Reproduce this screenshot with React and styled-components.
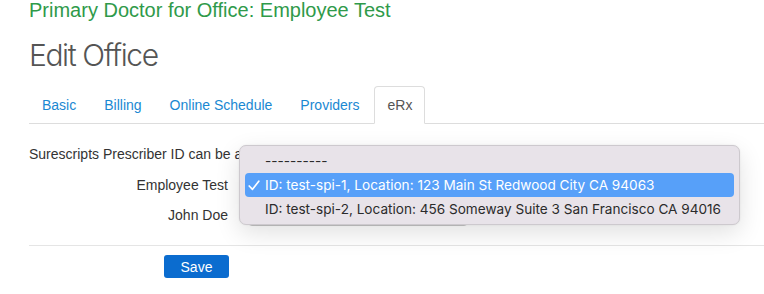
import React from 'react'
import styled, { createGlobalStyle } from 'styled-components'

const GlobalStyle = createGlobalStyle`
  html, body {
    margin: 0;
    padding: 0;
    background: #ffffff;
  }
  body {
    font-family: "Liberation Sans", Arial, sans-serif;
    font-size: 14px;
    color: #333;
  }
`

const Page = styled.div`
  position: relative;
  width: 764px;
  height: 294px;
  overflow: hidden;
  padding: 0 0 0 29px;
  box-sizing: border-box;
`

const Heading = styled.h3`
  margin: 0;
  padding-top: 0;
  font-size: 20px;
  line-height: 21px;
  font-weight: normal;
  color: #2f9a4a;
`

const PageTitle = styled.h1`
  margin: 17px 0 0;
  font-family: Inter, "Liberation Sans", sans-serif;
  font-weight: 300;
  font-size: 30px;
  line-height: 34px;
  letter-spacing: -1.4px;
  color: #555;
`

const Tabs = styled.ul`
  display: flex;
  list-style: none;
  margin: 14px 0 0;
  padding: 0;
  border-bottom: 1px solid #ddd;
  height: 37px;
`

const Tab = styled.li`
  margin-right: 2px;
  margin-bottom: -1px;
  padding: 0 12px;
  height: 38px;
  display: flex;
  align-items: center;
  box-sizing: border-box;
  font-size: 14px;
  color: ${p => (p.active ? '#555' : '#1a88d2')};
  background: ${p => (p.active ? '#fff' : 'transparent')};
  border: 1px solid ${p => (p.active ? '#ddd' : 'transparent')};
  border-bottom-color: ${p => (p.active ? '#fff' : 'transparent')};
  border-radius: 4px 4px 0 0;
`

const Intro = styled.p`
  margin: 21px 0 0;
  font-size: 14px;
  line-height: 18px;
  color: #333;
`

const Form = styled.div`
  display: grid;
  grid-template-columns: 199px 220px;
  column-gap: 20px;
  row-gap: 7px;
  margin-top: 10px;
  width: 440px;
`

const Label = styled.label`
  justify-self: end;
  align-self: center;
  font-size: 14px;
  color: #333;
`

const Select = styled.div`
  height: 23px;
  border: 1px solid #c8c8c8;
  border-radius: 4px;
  background: #fff;
  box-sizing: border-box;
`

const Divider = styled.hr`
  margin: 19px 0 0;
  border: none;
  border-top: 1px solid #e5e5e5;
`

const Actions = styled.div`
  display: grid;
  grid-template-columns: 200px;
  margin-top: 9px;
`

const SaveButton = styled.button`
  justify-self: end;
  width: 65px;
  height: 23px;
  border: none;
  border-radius: 3px;
  background: #0b6ccf;
  color: #fff;
  font-family: "Liberation Sans", Arial, sans-serif;
  font-size: 14px;
  padding: 0;
`

const Popup = styled.ul`
  position: absolute;
  left: 239px;
  top: 145px;
  width: 501px;
  height: 80px;
  margin: 0;
  padding: 3px 5px;
  box-sizing: border-box;
  list-style: none;
  background: #e8e3e9;
  border: 1px solid #cdc9ce;
  border-radius: 7px;
  box-shadow: 0 8px 24px rgba(0, 0, 0, 0.12), 0 0 2px rgba(0, 0, 0, 0.08);
  font-family: Inter, "Liberation Sans", sans-serif;
  font-size: 13.6px;
`

const Option = styled.li`
  position: relative;
  height: 24px;
  line-height: 24px;
  padding-left: 20px;
  border-radius: 4px;
  color: ${p => (p.selected ? '#fff' : '#2b2b2b')};
  background: ${p => (p.selected ? '#57a0f9' : 'transparent')};
  white-space: nowrap;
`

const Check = styled.svg`
  position: absolute;
  left: 3px;
  top: 7px;
`

const options = [
  '----------',
  'ID: test-spi-1, Location: 123 Main St Redwood City CA 94063',
  'ID: test-spi-2, Location: 456 Someway Suite 3 San Francisco CA 94016',
]

export default function App() {
  return (
    <React.Fragment>
      <GlobalStyle />
      <Page>
        <Heading>Primary Doctor for Office: Employee Test</Heading>
        <PageTitle>Edit Office</PageTitle>
        <Tabs>
          <Tab>Basic</Tab>
          <Tab>Billing</Tab>
          <Tab>Online Schedule</Tab>
          <Tab>Providers</Tab>
          <Tab active>eRx</Tab>
        </Tabs>
        <Intro>Surescripts Prescriber ID can be assigned to each provider below.</Intro>
        <Form>
          <Label>Employee Test</Label>
          <Select />
          <Label>John Doe</Label>
          <Select />
        </Form>
        <Divider />
        <Actions>
          <SaveButton>Save</SaveButton>
        </Actions>
        <Popup>
          {options.map((o, i) => (
            <Option key={i} selected={i === 1}>
              {i === 1 && (
                <Check width="12" height="11" viewBox="0 0 12 11">
                  <path d="M1.2 6 L4.5 9.3 L10.8 1.2" fill="none" stroke="#fff" strokeWidth="1.7" strokeLinecap="round" strokeLinejoin="round" />
                </Check>
              )}
              {o}
            </Option>
          ))}
        </Popup>
      </Page>
    </React.Fragment>
  )
}
